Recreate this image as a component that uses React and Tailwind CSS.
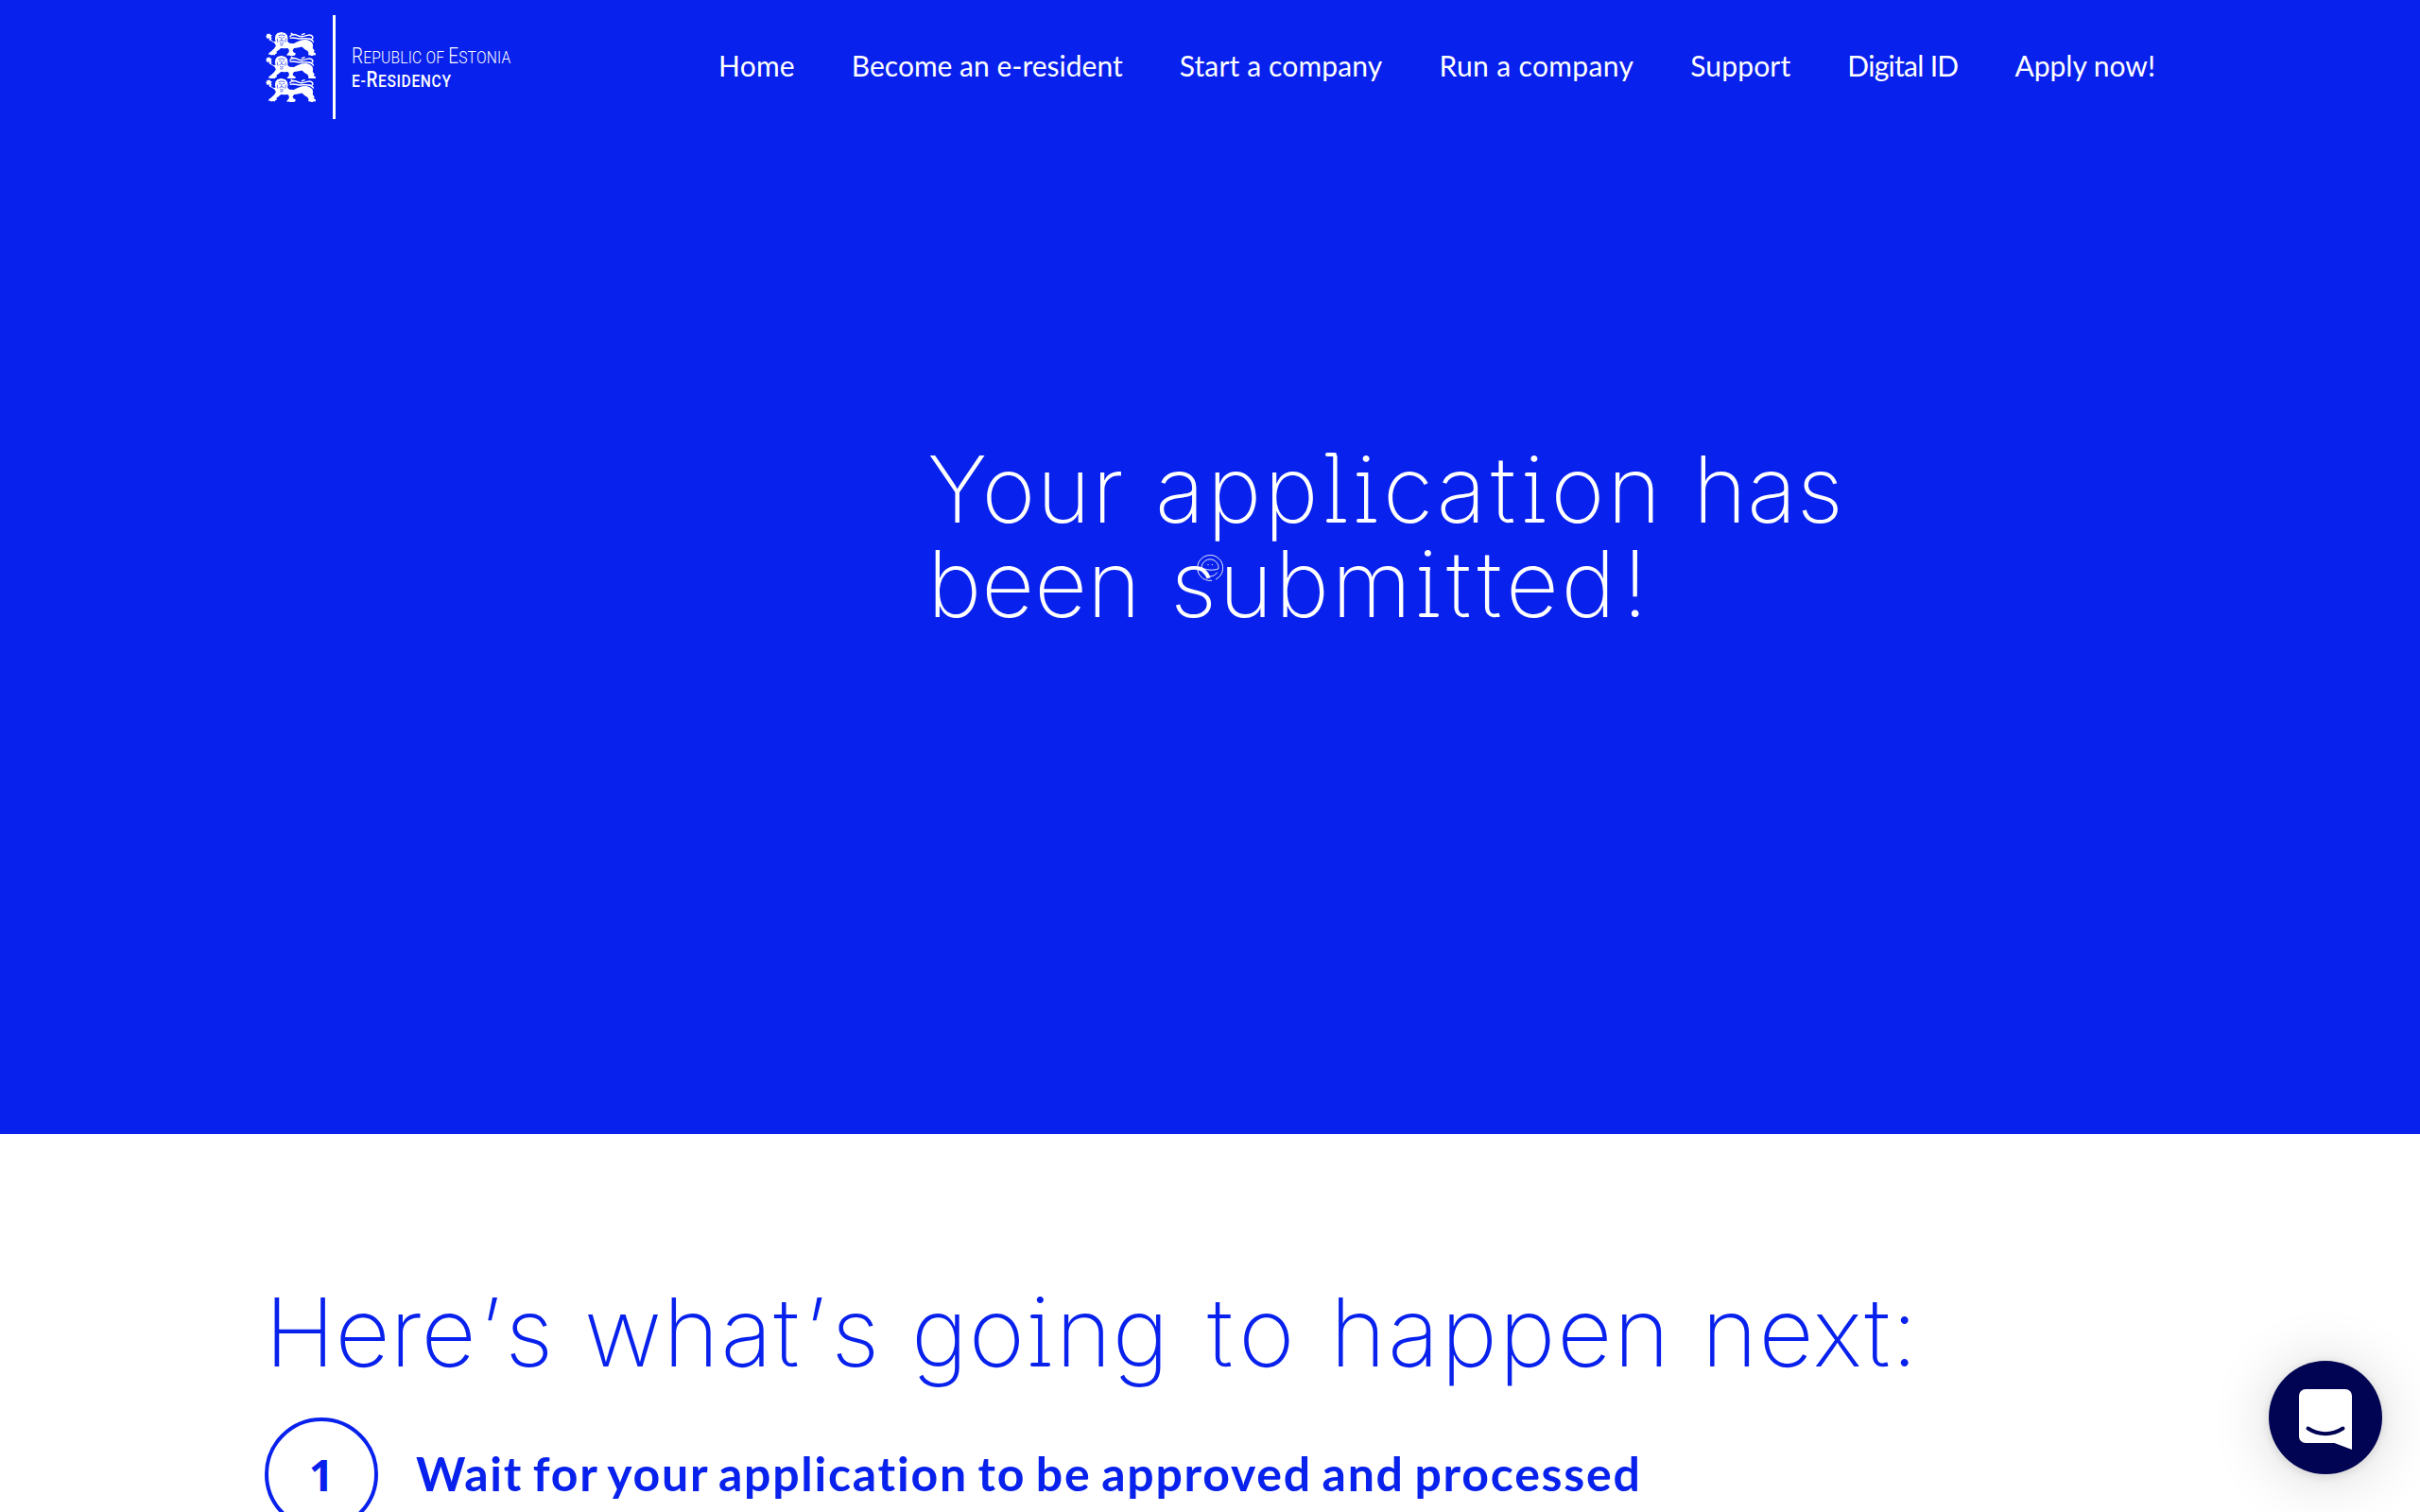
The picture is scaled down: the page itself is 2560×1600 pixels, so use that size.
import React from 'react';

const NAV = [
  { label: 'Home', cls: 'tracking-[0.2px]' },
  { label: 'Become an e-resident', cls: '' },
  { label: 'Start a company', cls: 'tracking-[0.15px]' },
  { label: 'Run a company', cls: 'tracking-[0.35px]' },
  { label: 'Support', cls: 'tracking-[0.15px]' },
  { label: 'Digital ID', cls: 'tracking-[-0.7px]' },
  { label: 'Apply now!', cls: '' },
];

function Lion() {
  return (
    <svg viewBox="0 0 164 74" className="block h-[24.6px] w-[55px]" fill="#fff">
      <path d="M3 12l4-3-2-4 7 1 3-2 3 5 5 1-4 5 3 5-3 4 8 6 7-1-2-9 2-10 6-7 12-3 12 3 7 7 2 10-1 9 6 6 14 1 12-6 14-5 14-1 10 3 9 7 2 9-1 8 6 8-3 4 7 5-1 6-6-1-4 4-6-3-7-1 1-6-3-7-10-6-8-7-14 3-11 1-5 7 3 6 7 4-2 6-6 1-6 2-7-3-7 1 1-6 5-4 1-8-4-6-10 1-12-1-8 7-6 4 1 6-5 2-2 4-5-2-6 2-4-3-5 1 2-6 7-5 9-8 6-9-4-9-9-6-9-4 1-6-7 2z" />
      <path d="M154 30c-4-8-14-10-24-10s-17 2-26 0-16-4-23-1M80 14c5-9 15-8 24-3s18 4 28 0c9-3 18-2 20 4s-4 10-10 6M84 4l7 5M118 8l8-3" fill="none" stroke="#fff" strokeWidth="4.5" strokeLinecap="round" />
      <path d="M43 12c5-4 16-4 21 0M45 17h5M57 17h5M53 17v9M46 29l7-3 8 3M48 34c4 3 8 3 11 0M39 20l2 12M67 20l-2 12M48 40l5 3 5-3" fill="none" stroke="#0821EC" strokeWidth="2" />
    </svg>
  );
}

function Logo() {
  return (
    <a className="flex h-[110px] w-[262px] shrink-0 items-center">
      <span className="flex w-[55px] flex-col">
        <Lion />
        <Lion />
        <Lion />
      </span>
      <span className="ml-[17px] h-[110px] w-[2.5px] shrink-0 bg-white" />
      <span className="ml-[17px] flex origin-left scale-x-[0.82] flex-col whitespace-nowrap pt-[4px] font-['Roboto'] text-[19px] uppercase leading-[24px]">
        <span className="w-max font-light tracking-[0.26px]"><span className="text-[23px]">R</span>epublic of <span className="text-[23px]">E</span>stonia</span>
        <span className="w-max font-medium tracking-[0.8px]">e-<span className="text-[23px]">R</span>esidency</span>
      </span>
    </a>
  );
}

/* Letters with slab feet, as in the heading's monoline display face */
function SlabI() {
  return (
    <span className="relative px-[4px] before:absolute before:left-[5px] before:top-[0.424em] before:h-[4px] before:w-[12px] before:rounded-full before:bg-current after:absolute after:bottom-[0.241em] after:left-[5px] after:h-[4px] after:w-[21px] after:rounded-full after:bg-current">i</span>
  );
}

function SlabL() {
  return (
    <span className="relative px-[4px] before:absolute before:left-[4px] before:top-[0.211em] before:h-[4px] before:w-[12px] before:rounded-full before:bg-current after:absolute after:bottom-[0.241em] after:left-[5px] after:h-[4px] after:w-[21px] after:rounded-full after:bg-current">l</span>
  );
}

function ChatButton() {
  return (
    <button className="fixed bottom-[40px] right-[40px] flex h-[120px] w-[120px] items-center justify-center rounded-full bg-[#010452] shadow-[0_2px_12px_rgba(0,0,0,0.12),0_4px_64px_rgba(0,0,0,0.16)]">
      <svg viewBox="0 0 56 64" className="mt-[4px] h-[64px] w-[56px]">
        <path d="M7 0H49a7 7 0 0 1 7 7V64L37.5 57H7a7 7 0 0 1-7-7V7a7 7 0 0 1 7-7Z" fill="#fff" />
        <path d="M9.5 41.5C21 49 35 49 46.5 41.5" fill="none" stroke="#010452" strokeWidth="4" strokeLinecap="round" />
      </svg>
    </button>
  );
}

export default function App() {
  return (
    <div className="h-[1600px] w-[2560px] overflow-hidden bg-white">
      <section className="flex h-[1200px] flex-col bg-[#0821EC] text-white">
        <header className="flex items-start justify-between px-[280px] pt-[16px]">
          <Logo />
          <nav className="mt-[35px] flex gap-[60px] font-['Lato'] text-[30px] leading-[36px]">
            {NAV.map((n) => (
              <a key={n.label} className={`whitespace-nowrap ${n.cls}`}>{n.label}</a>
            ))}
          </nav>
        </header>
        <h1 className="relative ml-[981px] mt-[342px] w-[1000px] whitespace-nowrap font-['Inter'] text-[97px] font-[225] leading-[100px]">
          <span className="block">
            <span className="inline-block w-[241px] tracking-[1.5px]">Your </span>
            <span className="inline-block w-[569px] tracking-[2.9px]">app<SlabL /><SlabI />ca<span className="px-[2px]">t</span><SlabI />on </span>
            <span className="inline-block tracking-[0.3px]">has</span>
          </span>
          <span className="block">
            <span className="inline-block w-[257px]">been </span>
            <span className="inline-block tracking-[2.5px]">subm<SlabI /><span className="px-[2px]">t</span><span className="px-[2px]">t</span>ed<span className="pl-[5px]">!</span></span>
          </span>
          <svg viewBox="0 0 28 28" className="absolute left-[285px] top-[119px] h-[28px] w-[28px]" fill="none" stroke="#fff" strokeWidth="0.9">
            <path d="M16 27.3A13.5 13.5 0 1 1 20 26.1M23 14.7A9 9 0 1 0 21.7 18.6M5 13.4C9 16.6 19 17 23 14.7" />
            <path d="M12 10v1.2M16.4 10v1.2" />
          </svg>
        </h1>
      </section>
      <main className="px-[280px] pt-[147px] text-[#0821EC]">
        <h2 className="whitespace-nowrap font-['Inter'] text-[101px] font-[225] leading-[124px]">
          <span className="inline-block w-[338px]">Here<span className="px-[4px]">’</span>s </span>
          <span className="inline-block w-[346px] tracking-[1.6px]">what<span className="px-[4px]">’</span>s </span>
          <span className="inline-block w-[309px] tracking-[1px]">go<SlabI />ng </span>
          <span className="inline-block w-[134px]"><span className="pl-[4px] pr-[6px]">t</span>o </span>
          <span className="inline-block w-[393px] tracking-[1.8px]">happen </span>
          <span className="inline-block tracking-[1.3px]">next:</span>
        </h2>
        <div className="mt-[29px] flex items-center gap-[40px] font-['Lato'] font-bold">
          <span className="flex h-[120px] w-[120px] shrink-0 items-center justify-center rounded-full border-4 border-[#0821EC] font-['Open_Sans'] text-[46px]">1</span>
          <h3 className="-mt-[3px] whitespace-nowrap text-[50px] leading-[60px] tracking-[1.75px] [word-spacing:-3.2px]">Wait for your application to be approved and processed</h3>
        </div>
      </main>
      <ChatButton />
    </div>
  );
}
